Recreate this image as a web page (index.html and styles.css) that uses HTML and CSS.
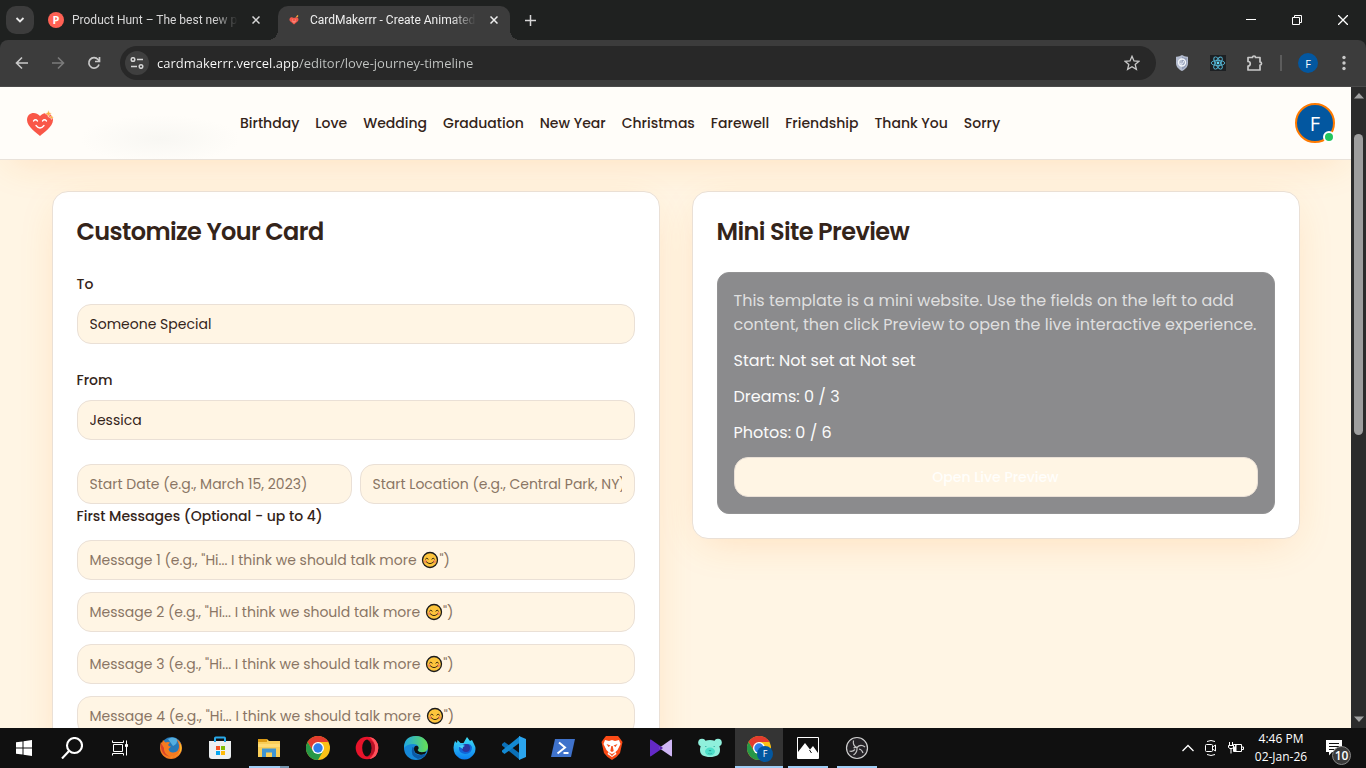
FILE: index.html
```html
<!DOCTYPE html>
<html lang="en">
<head>
<meta charset="utf-8">
<meta name="viewport" content="width=device-width, initial-scale=1">
<title>CardMakerrr - Create Animated Cards</title>
<link rel="stylesheet" href="styles.css">
</head>
<body>

<div class="tabstrip">
  <button class="tab-search" aria-label="Search tabs"><svg width="10" height="10" viewBox="0 0 10 10"><path d="M1.5 3l3.5 3.5L8.500 3" fill="none" stroke="#e8e8e8" stroke-width="1.8"/></svg></button>
  <div class="tab">
    <span class="ph-icon">P</span>
    <span class="tab-title">Product Hunt – The best new pr</span>
    <button class="tab-close" aria-label="Close tab"><svg width="8" height="8" viewBox="0 0 8 8"><path d="M.5.5l7 7m0-7l-7 7" stroke="#d8d8d8" stroke-width="1.5"/></svg></button>
  </div>
  <div class="tab active">
    <svg class="fav" width="16" height="16" viewBox="0 0 16 16"><path d="M8 12.500L4.500 9.500C2 7 4.500 3.500 8 6c3.500-2.500 6 1 3.500 3.500z" fill="#f4594b"/><path d="M10.500 5l1.500-1.500" stroke="#ffb03b" stroke-width="1.200"/><path d="M6 8h.8M9.200 8h.8M6.500 9.500q1.500 1.200 3 0" stroke="#ffd0c4" stroke-width=".6" fill="none"/></svg>
    <span class="tab-title">CardMakerrr - Create Animated</span>
    <button class="tab-close" aria-label="Close tab"><svg width="8" height="8" viewBox="0 0 8 8"><path d="M.5.5l7 7m0-7l-7 7" stroke="#eee" stroke-width="1.5"/></svg></button>
  </div>
  <button class="new-tab" aria-label="New tab"><svg width="11" height="11" viewBox="0 0 11 11"><path d="M5.500 0v11M0 5.500h11" stroke="#d6d6d6" stroke-width="1.5"/></svg></button>
  <div class="win-controls">
    <button aria-label="Minimize"><svg width="10" height="10" viewBox="0 0 10 10"><path d="M0 4.500h10" stroke="#fff"/></svg></button>
    <button aria-label="Restore"><svg width="10" height="10" viewBox="0 0 10 10" fill="none" stroke="#fff"><path d="M.5 2.500h7v7h-7zM2.500 2.500v-2h7v7h-2"/></svg></button>
    <button aria-label="Close"><svg width="10" height="10" viewBox="0 0 10 10"><path d="M0 0l10 10M10 0L0 10" stroke="#fff" stroke-width="1.3"/></svg></button>
  </div>
</div>

<div class="toolbar">
  <button class="tool" aria-label="Back"><svg width="14" height="14" viewBox="0 0 14 14" fill="none" stroke="#c9c9c9" stroke-width="1.6"><path d="M13 7H2M7 1.500L1.500 7 7 12.500"/></svg></button>
  <button class="tool" aria-label="Forward"><svg width="14" height="14" viewBox="0 0 14 14" fill="none" stroke="#7b7b7b" stroke-width="1.6"><path d="M1 7h11M7 1.500L12.500 7 7 12.500"/></svg></button>
  <button class="tool" aria-label="Reload"><svg width="14" height="14" viewBox="0 0 14 14" fill="none" stroke="#c9c9c9" stroke-width="1.7"><path d="M12 8.500A5.200 5.200 0 1 1 11 3.500L12.500 5M12.500 1v4.500H8"/></svg></button>
  <div class="omnibox">
    <button class="site-info" aria-label="View site information"><svg width="14" height="12" viewBox="0 0 14 12" fill="none" stroke="#d5d5d5" stroke-width="1.5"><circle cx="3" cy="2.500" r="1.800"/><path d="M7 2.500h6M1 9.500h6"/><circle cx="11" cy="9.500" r="1.800"/></svg></button>
    <input class="url" type="text" aria-label="Address" value="cardmakerrr.vercel.app/editor/love-journey-timeline">
    <button class="star" aria-label="Bookmark"><svg width="16" height="16" viewBox="0 0 16 16"><path d="M8 1.300l2 4.600 5 .4-3.800 3.200 1.200 4.900L8 11.800l-4.400 2.600 1.200-4.900L1 6.300l5-.4z" fill="none" stroke="#c9c9c9" stroke-width="1.300"/></svg></button>
  </div>
  <div class="extensions">
    <button class="tool" aria-label="Shield"><svg width="14" height="16" viewBox="0 0 14 16"><path d="M7 0q3 2 6 1.700V8c0 4-3 6.500-6 8-3-1.500-6-4-6-8V1.700Q4 2 7 0z" fill="#b4bccf"/><path d="M7 1.500v13c3-1.500 4.800-3.500 4.800-6.500V3Q9 3 7 1.500z" fill="#929cb6"/><circle cx="7" cy="7.500" r="3.500" fill="none" stroke="#f3f6fb" stroke-width="1.400"/><path d="M5 8.500q3 2 3.500-2.500" fill="none" stroke="#dfe6f3" stroke-width="1.200"/></svg></button>
    <button class="tool" aria-label="React tools"><svg width="16" height="16" viewBox="0 0 16 16"><path fill="#1d2023" d="M0 0h16v16H0z"/><g fill="none" stroke="#55b7d6" stroke-width=".9"><ellipse cx="8" cy="8" rx="6.800" ry="2.600"/><ellipse cx="8" cy="8" rx="6.800" ry="2.600" transform="rotate(60 8 8)"/><ellipse cx="8" cy="8" rx="6.800" ry="2.600" transform="rotate(120 8 8)"/></g><circle cx="8" cy="8" r="1.400" fill="#61dafb"/></svg></button>
    <button class="tool" aria-label="Extensions"><svg width="18" height="18" viewBox="0 0 18 18"><path d="M3 3.500h4.500a1.500 1.500 0 0 1 3 0H15V8a1.500 1.500 0 0 1 0 3v5H3v-4a2 2 0 0 0 0-4.500z" fill="none" stroke="#c9c9c9" stroke-width="1.700" stroke-linejoin="round"/></svg></button>
    <span class="sep"></span>
    <button class="avatar-mini">F</button>
    <button class="tool menu" aria-label="Menu"><svg width="4" height="16" viewBox="0 0 4 16" fill="#c9c9c9"><circle cx="2" cy="2.500" r="1.700"/><circle cx="2" cy="8" r="1.700"/><circle cx="2" cy="13.500" r="1.700"/></svg></button>
  </div>
</div>

<div class="viewport">
  <div class="page">
    <header class="site-header">
      <a class="logo" href="#" aria-label="CardMakerrr"><svg width="28" height="27" viewBox="0 -1 28 27"><path d="M14 25C11 22 1 16 1 9 1 2 9-.5 14 5c5-5.500 13-3 13 4 0 7-10 13-13 16z" fill="#f95748"/><path d="M7.500 10q2-2.500 4 0M16.500 10q2-2.500 4 0M10 14.500q4 5 8 0" fill="none" stroke="#fff" stroke-width="1.300" stroke-linecap="round"/><path d="M22.500-1l1 2.600 2.500 1-2.500 1-1 2.600-1-2.600-2.500-1 2.500-1z" fill="#fbb040" stroke="#fffdf9" stroke-width=".5"/><path d="M25.500 4l.7 1.600 1.600.7-1.600.7-.7 1.600-.7-1.600-1.600-.7 1.600-.7z" fill="#fbb040" stroke="#fffdf9" stroke-width=".4"/></svg></a>
      <nav class="site-nav">
        <a href="#">Birthday</a>
        <a href="#">Love</a>
        <a href="#">Wedding</a>
        <a href="#">Graduation</a>
        <a href="#">New Year</a>
        <a href="#">Christmas</a>
        <a href="#">Farewell</a>
        <a href="#">Friendship</a>
        <a href="#">Thank You</a>
        <a href="#">Sorry</a>
      </nav>
      <button class="profile">F<span class="online"></span></button>
    </header>

    <main class="editor">
      <form class="card">
        <h2>Customize Your Card</h2>
        <div class="field">
          <label for="to">To</label>
          <input id="to" class="input" type="text" value="Someone Special">
        </div>
        <div class="field">
          <label for="from">From</label>
          <input id="from" class="input" type="text" value="Jessica">
        </div>
        <div class="start-row">
          <input class="input" type="text" aria-label="Start date" placeholder="Start Date (e.g., March 15, 2023)">
          <input class="input" type="text" aria-label="Start location" placeholder="Start Location (e.g., Central Park, NY)">
        </div>
        <fieldset class="messages">
          <legend>First Messages (Optional - up to 4)</legend>
          <label class="message"><input class="input" type="text" placeholder=" "><span class="hint">Message 1 (e.g., "Hi... I think we should talk more <svg class="smile" viewBox="0 0 18 18"><use href="#smile"/></svg>")</span></label>
          <label class="message"><input class="input" type="text" placeholder=" "><span class="hint">Message 2 (e.g., "Hi... I think we should talk more <svg class="smile" viewBox="0 0 18 18"><use href="#smile"/></svg>")</span></label>
          <label class="message"><input class="input" type="text" placeholder=" "><span class="hint">Message 3 (e.g., "Hi... I think we should talk more <svg class="smile" viewBox="0 0 18 18"><use href="#smile"/></svg>")</span></label>
          <label class="message"><input class="input" type="text" placeholder=" "><span class="hint">Message 4 (e.g., "Hi... I think we should talk more <svg class="smile" viewBox="0 0 18 18"><use href="#smile"/></svg>")</span></label>
        </fieldset>
      </form>

      <section class="card">
        <h2>Mini Site Preview</h2>
        <div class="preview">
          <p class="intro">This template is a mini website. Use the fields on the left to add content, then click Preview to open the live interactive experience.</p>
          <p>Start: Not set at Not set</p>
          <p>Dreams: 0 / 3</p>
          <p>Photos: 0 / 6</p>
          <button class="open-preview">Open Live Preview</button>
        </div>
      </section>
    </main>
  </div>
  <div class="scrollbar">
    <svg width="10" height="6" viewBox="0 0 10 6"><path d="M0 5.500L5 0l5 5.500z" fill="#a0a0a0"/></svg>
    <div class="track"><div class="thumb"></div></div>
    <svg width="10" height="6" viewBox="0 0 10 6"><path d="M0 .5L5 6l5-5.500z" fill="#a0a0a0"/></svg>
  </div>
</div>

<footer class="taskbar">
  <button class="task" aria-label="Start"><svg width="16" height="16" viewBox="0 0 16 16" fill="#fff"><path d="M0 2.300l6.500-.9v6.100H0zM7.500 1.200L16 0v7.500H7.500zM0 8.500h6.500v6.100L0 13.700zM7.500 8.500H16V16l-8.500-1.200z"/></svg></button>
  <button class="task" aria-label="Search"><svg width="22" height="22" viewBox="0 0 22 22" fill="none" stroke="#fff" stroke-width="2.100"><circle cx="13.500" cy="8.500" r="7.500"/><path d="M8 14l-7 7.500"/></svg></button>
  <button class="task" aria-label="Task view"><svg width="18" height="16" viewBox="0 0 18 16" fill="none" stroke="#fff"><path d="M2.500 4.500h9v7h-9zM1.500.5v2h11v-2M1.500 15.500v-2h11v2M15.500.5v15"/><path fill="#fff" d="M14.500 4.500h2v2h-2z"/></svg></button>
  <button class="task" aria-label="Firefox"><svg width="24" height="24" viewBox="0 0 24 24"><circle cx="12.500" cy="11.500" r="10.500" fill="#2779b8"/><path d="M9 3q5-3 9 0 1 5-4 7z" fill="#53aee0"/><path d="M2 6l1 1 1-3 2.500 2.500Q9 5.500 11 6.500L9 9q1 1.500 3 1.500L9.500 13q1 4 5 3.500 5-.5 5.500-5.500Q20 6 17 3q6 3 6 9c0 6-5 11-11 11S1 18 1 12q0-3 1-6z" fill="#f47b20"/><path d="M20 6q5 6 0 12-4 4-9 3 8 0 10-6 1-5-1-9z" fill="#ffc928"/><path d="M2 7q-1 8 4 12l5 2q-7-4-6-9z" fill="#d9422a"/></svg></button>
  <button class="task" aria-label="Store"><svg width="24" height="24" viewBox="0 0 24 24"><path d="M1 5h22v15q0 3-3 3H4q-3 0-3-3z" fill="#eceff1"/><path d="M7 6V2.200q0-.7.7-.7h8.600q.7 0 .7.700V6" fill="none" stroke="#28a8e8" stroke-width="2"/><path fill="#f35325" d="M8 10h4v4H8z"/><path fill="#81bc06" d="M13 10h4v4h-4z"/><path fill="#05a6f0" d="M8 15h4v4H8z"/><path fill="#ffba08" d="M13 15h4v4h-4z"/></svg></button>
  <button class="task running stacked" aria-label="File Explorer"><svg width="22" height="20" viewBox="0 0 22 20"><path d="M0 1h9l2 2h11v16H0z" fill="#f9ce58"/><path d="M0 6h22v3H0z" fill="#ffdc75"/><path d="M0 1h9v3H0z" fill="#dc9a13"/><path d="M4 10.500h14V19h-4v-4.500H8V19H4z" fill="#3f95d3"/></svg></button>
  <button class="task" aria-label="Chrome"><svg width="24" height="24" viewBox="0 0 24 24"><use href="#chrome"/></svg></button>
  <button class="task" aria-label="Opera"><svg width="24" height="24" viewBox="0 0 24 24"><circle cx="12" cy="12" r="11.300" fill="#e8142b"/><path d="M14 1q9 1 9.300 11Q23 22 14 23q6-4 6-11T14 1z" fill="#ff535c"/><ellipse cx="12" cy="12" rx="4.800" ry="8.600" fill="#101010"/><path d="M12 3.400q4.800 2 4.800 8.600T12 20.600q8-1 8-8.600t-8-8.600z" fill="#b51225"/></svg></button>
  <button class="task" aria-label="Edge"><svg width="24" height="24" viewBox="0 0 24 24"><defs><linearGradient id="eg"><stop stop-color="#20a8e3"/><stop offset="1" stop-color="#67df52"/></linearGradient></defs><circle cx="12" cy="12" r="12" fill="#1688d8"/><path d="M0 12Q0 0 12 0c7 0 12 5 12 10.500 0 4-3 6-6.500 6-3 0-4.500-1-3.500-2.500Q16 8 9.500 8 3 8 0 12z" fill="url(#eg)"/><path d="M10 13c0-3.500 3-4 4.500-2Q15 13 13.500 14q1.500 3.500 9 1.500-2 4-7 3-5.500-1-5.500-5.500z" fill="#101010"/><path d="M8.500 11q-3 9 5.500 12 6-1 8-5.500-5 3-9 1-4-2-3-6.500z" fill="#0c59a4"/></svg></button>
  <button class="task" aria-label="Firefox Developer Edition"><svg width="24" height="24" viewBox="0 0 24 24"><defs><linearGradient id="ff" x1="0" y1="0" x2="0" y2="1"><stop stop-color="#3fe0f5"/><stop offset="1" stop-color="#0a7df0"/></linearGradient></defs><path d="M2 5l2 2 .500-3 3 3h3L14 1l3 4 2-1 2 4q3 5 0 10-4 5.500-9.500 5.500T2 18Q-1 12 2 5z" fill="url(#ff)"/><path d="M6 10q3-2 6-1 5-3 7 2 0 7-7 7-6-1-6-5z" fill="#1164d8"/><circle cx="13" cy="12" r="4" fill="#2b35a0"/><path d="M5 10q5-2 7 0-3 1-2 3z" fill="#45cffa"/></svg></button>
  <button class="task" aria-label="VS Code"><svg width="24" height="24" viewBox="0 0 24 24"><path d="M0 8l2.500-2L18 17.500V24L0 9.500z" fill="#0b70b8"/><path d="M0 16l2.500 2L18 6.500V0L0 14.500z" fill="#1389d2"/><path d="M17 0l7 3v18l-7 3z" fill="#2ba5ee"/></svg></button>
  <button class="task" aria-label="PowerShell"><svg width="24" height="20" viewBox="0 0 24 20"><path d="M4 1h20l-4 18H0z" fill="#3f72cb"/><path d="M8 4.500l6 5-7.500 6M12.500 15h5" fill="none" stroke="#fff" stroke-width="2"/></svg></button>
  <button class="task" aria-label="Brave"><svg width="22" height="24" viewBox="0 0 22 24"><path d="M5 0h12l2 2.500L21.500 6 19 17q-3 4.500-8 7-5-2.500-8-7L.5 6 3 2.500z" fill="#fb4b16"/><path d="M4 4l4 1 3-1 3 1 4-1 1.500 4-3 6-2 2 1 2-4.500 3L6.500 18l1-2-2-2-3-6z" fill="#fff"/><path d="M5.500 8l4 1.500-2 1.500zM16.500 8l-4 1.500 2 1.500zM10.300 10h1.400l1 5-1.700 1-1.700-1zM7 16l4 2 4-2-4 4z" fill="#f6501d"/></svg></button>
  <button class="task" aria-label="Media player"><svg width="22" height="18" viewBox="0 0 22 18"><path d="M0 1.500q0-1.500 1.300-.7L13 9 1.300 17Q0 18 0 16.500z" fill="#6429c7"/><path d="M22 1.500q0-1.500-1.300-.7L9 9l11.700 8q1.300 1 1.300-.5z" fill="#cfb6f5"/><path d="M11 7.600L13 9l-2 1.400L9 9z" fill="#5623ad"/></svg></button>
  <button class="task" aria-label="Bear"><svg width="24" height="20" viewBox="0 0 24 20"><g fill="#8ff0dc"><circle cx="4" cy="4.500" r="3.800"/><circle cx="20" cy="4.500" r="3.800"/><path d="M12 2c7 0 10 5 10 10s-4 7-10 7S2 17 2 12 5 2 12 2z"/></g><ellipse cx="12" cy="13.500" rx="5" ry="4" fill="#4cdfc9"/><path d="M10.500 12h3L12 13.500z" fill="#229d93"/><path d="M7 8.500h1.500M15.500 8.500H17M10 15.500q2 1 4 0" stroke="#2fb3a6" stroke-width=".8" fill="none"/></svg></button>
  <button class="task running current" aria-label="Chrome, CardMakerrr"><svg width="24" height="24" viewBox="0 0 24 24"><use href="#chrome"/></svg><span class="task-badge">F</span></button>
  <button class="task running" aria-label="Photos"><svg width="22" height="22" viewBox="0 0 22 22"><path d="M.5.5h21v21H.5z" fill="#101010" stroke="#fff"/><path d="M1 15l7-9 5 6.500L16 9l5 7v5H1z" fill="#fff"/><path d="M12.500 13l2 3" stroke="#101010"/></svg></button>
  <button class="task running" aria-label="OBS"><svg width="24" height="24" viewBox="0 0 24 24"><circle cx="12" cy="12" r="10.500" fill="#242226" stroke="#cfcfcf" stroke-width="1.200"/><path d="M8.500 4.500q-1 5.500 3.500 7M12 11.500q3.500-4 8-.5M12 11.500q.5 5-3.500 7.500M12 11.500q-2-.5-3.500.5M4.500 15q3 1 5.500-1.500M18 17q-1-3.500-4-4" fill="none" stroke="#c5c5c5" stroke-width="1.200"/></svg></button>

  <div class="tray">
    <button aria-label="Show hidden icons"><svg width="12" height="8" viewBox="0 0 12 8"><path d="M.5 7L6 1.500 11.500 7" fill="none" stroke="#fff" stroke-width="1.300"/></svg></button>
    <button aria-label="Meet now"><svg width="12" height="16" viewBox="0 0 12 16" fill="none" stroke="#fff"><rect x=".5" y="4.500" width="7" height="7" rx="1"/><path d="M7.500 7l3-2v6l-3-2M2 1.500q4-2 8 0M2 14.500q4 2 8 0"/></svg></button>
    <button aria-label="Battery"><svg width="16" height="12" viewBox="0 0 16 12" fill="none" stroke="#fff"><path d="M5.500 2.500h8v7h-8zM14 5h1.500v2.500H14M1.500 0v3M4.500 0v3M.5 3.500h5v2l-1.500 1H2l-1.500-1zM3 6.500v5"/><path d="M6 9V6l2-3v6z" fill="#fff"/></svg></button>
  </div>
  <time class="clock"><span>4:46 PM</span><span>02-Jan-26</span></time>
  <button class="notify" aria-label="Notifications"><svg width="16" height="16" viewBox="0 0 16 16"><path d="M0 0h16v12H6l-3 3.500V12H0z" fill="#fff"/><path d="M3 3.500h10M3 6.500h10M3 9.500h5" stroke="#101010"/></svg><span class="count">10</span></button>
</footer>

<svg class="sprites" width="0" height="0" aria-hidden="true">
  <symbol id="smile" viewBox="0 0 18 18"><circle cx="9" cy="9" r="7.500" fill="#fcc43c" stroke="#1b1b1b" stroke-width="1.300"/><circle cx="4.500" cy="10.500" r="1.500" fill="#f58a55"/><circle cx="13.500" cy="10.500" r="1.500" fill="#f58a55"/><path d="M4.500 8q1.300-2 2.700 0M10.800 8q1.300-2 2.700 0M5.500 11q3.500 3.500 7 0" fill="none" stroke="#3a2a12" stroke-linecap="round"/></symbol>
  <symbol id="chrome" viewBox="0 0 24 24"><circle cx="12" cy="12" r="12" fill="#fbc116"/><path d="M1.600 6a12 12 0 0 1 20.800 0H12L7 15z" fill="#e33b2e"/><path d="M1.600 6a12 12 0 0 0 10.400 18l5.200-9L7 15z" fill="#279847"/><circle cx="12" cy="12" r="6" fill="#fff"/><circle cx="12" cy="12" r="4.700" fill="#2f7de9"/></symbol>
</svg>
</body>
</html>
```
FILE: styles.css
```css
*{box-sizing:border-box;}
body{margin:0;height:100vh;display:flex;flex-direction:column;overflow:hidden;background:#1f2120;font-family:"Open Sans","Noto Sans",sans-serif;font-size:12px;}
button{padding:0;border:0;background:none;color:inherit;font:inherit;display:flex;align-items:center;justify-content:center;flex:none;}
input{font:inherit;}
a{text-decoration:none;color:inherit;}
p,h2{margin:0;}
.sprites{position:absolute;}

/* tab strip */
.tabstrip{display:flex;align-items:flex-start;height:40px;flex:none;padding:6px 0 0 6px;color:#d8d8d8;background:#1f2120;}
.tab-search{width:28px;height:28px;border-radius:10px;background:#3c3c3c;}
.tab{display:flex;align-items:center;width:232px;height:34px;margin-left:6px;padding:0 10px 6px 8px;gap:8px;}
.tab.active{border-radius:10px 10px 0 0;background:#3c3c3c;color:#eee;position:relative;}
.tab.active:before,.tab.active:after{content:"";position:absolute;bottom:0;width:10px;height:10px;}
.tab.active:before{left:-10px;background:radial-gradient(circle at 0 0,transparent 10px,#3c3c3c 10px);}
.tab.active:after{right:-10px;background:radial-gradient(circle at 100% 0,transparent 10px,#3c3c3c 10px);}
.ph-icon{width:16px;height:16px;flex:none;border-radius:50%;background:#ff6154;color:#fff;font:bold 11px/16px "Open Sans",sans-serif;text-align:center;}
.fav{flex:none;}
.tab-title{flex:1;overflow:hidden;white-space:nowrap;font-family:Roboto,sans-serif;-webkit-mask-image:linear-gradient(to right,#000 85%,transparent);mask-image:linear-gradient(to right,#000 85%,transparent);}
.tab-close{width:12px;height:16px;margin-left:4px;}
.new-tab{width:28px;height:28px;margin-left:6px;}
.win-controls{display:flex;margin-left:auto;}
.win-controls button{width:46px;height:28px;}

/* toolbar */
.toolbar{display:flex;align-items:center;height:47px;flex:none;padding:0 4px;background:#3c3c3c;border-radius:8px 8px 0 0;border-bottom:1px solid #4a4a4a;}
.tool{width:36px;height:34px;}
.omnibox{display:flex;align-items:center;flex:1;height:34px;margin:0 8px;padding:0 16px 0 5px;border-radius:17px;background:#282828;}
.site-info{width:24px;height:24px;border-radius:50%;background:#3f3f3f;}
.url{flex:1;min-width:0;border:0;outline:0;padding:0 8px;font-size:13px;line-height:20px;color:transparent;background:linear-gradient(to right,#fff 150px,#c4c7c5 150px);-webkit-background-clip:text;background-clip:text;}
.extensions{display:flex;align-items:center;}
.sep{width:2px;height:16px;margin:0 16px 0 8px;background:#5c5c5c;}
.avatar-mini{width:20px;height:20px;border-radius:50%;background:#0357a0;color:#fff;font-size:11px;}
.menu{margin-left:8px;}

/* page */
.viewport{display:flex;flex:1;min-height:0;}
.page{flex:1;overflow:hidden;background:#fff5e4;color:#34241a;font-family:Poppins,Inter,sans-serif;font-size:14px;line-height:24px;}
.site-header{display:flex;align-items:center;height:73px;padding:0 16px;position:relative;border-bottom:1px solid #e9e2da;background:radial-gradient(80px 24px at 160px 52px,#f8f7f3,transparent),#fffdf9;box-shadow:0 10px 40px -10px rgba(255,140,30,.2);}
.logo{display:flex;justify-content:center;width:48px;}
.site-nav{display:flex;gap:16px;margin-left:176px;font-weight:500;white-space:nowrap;}
.profile{position:relative;width:40px;height:40px;margin-left:auto;border:2px solid #ff7a00;border-radius:50%;background:#0357a0;color:#fff;font:20px "Open Sans",sans-serif;}
.online{position:absolute;right:-2px;bottom:-2px;width:12px;height:12px;border:2px solid #fff;border-radius:50%;background:#22c55e;}
.editor{display:grid;grid-template-columns:1fr 1fr;align-items:start;gap:32px;max-width:1280px;margin:0 auto;padding:31px 16px;}
.card{min-width:0;padding:24px;border:1px solid #eae0d6;border-radius:16px;background:#fff;box-shadow:0 10px 40px -10px rgba(255,140,30,.22);}
.card h2{margin-bottom:24px;font-size:24px;line-height:32px;font-weight:600;letter-spacing:-.025em;}
.field{margin-bottom:24px;}
.field label{display:block;margin-bottom:8px;font-weight:500;}
.input{display:block;width:100%;min-width:0;height:40px;padding:0 12px;border:1px solid #eae0d6;border-radius:14px;background:#fff5e4;color:#34241a;outline:0;}
.input::placeholder{color:#8a7564;opacity:1;}
.start-row{display:flex;gap:8px;}
.messages{display:grid;gap:12px;margin:0;padding:0;border:0;}
.messages legend{padding:0;margin-bottom:12px;font-weight:500;}
.message{display:block;position:relative;}
.hint{position:absolute;left:13px;top:8px;color:#8a7564;white-space:nowrap;pointer-events:none;}
.input:not(:placeholder-shown)+.hint{display:none;}
.smile{width:18px;height:18px;margin-left:1px;vertical-align:-4px;}
.preview{display:grid;gap:12px;padding:16px;border:1px solid #939394;border-radius:12px;background:#8b8b8d;color:#fafafa;font-size:16px;line-height:24px;}
.intro{color:#dfdfdf;}
.open-preview{width:100%;height:40px;border:1px solid #eae0d6;border-radius:14px;background:#fff5e4;color:#fffefb;font-size:14px;font-weight:500;}

.scrollbar{display:flex;flex-direction:column;align-items:center;width:15px;padding:6px 0;background:#2b2b2b;}
.track{flex:1;width:9px;padding:35px 0;}
.thumb{height:55%;border-radius:5px;background:#9e9e9e;}

/* taskbar */
.taskbar{display:flex;align-items:center;height:40px;flex:none;background:#101010;color:#fff;}
.task{position:relative;width:48px;height:40px;}
.task:nth-child(n+4){margin-left:1px;}
.task:nth-child(4){margin-left:3px;}
.running:after{content:"";position:absolute;left:4px;right:4px;bottom:0;height:2px;background:#9fcdf5;}
.stacked:after{background:linear-gradient(to right,#9fcdf5 31px,#7595af 31px);}
.current{background:#343434;}
.current:after{left:0;right:0;}
.task-badge{position:absolute;left:22px;top:18px;width:16px;height:16px;border-radius:50%;background:#0357a0;font-size:9px;line-height:16px;}
.tray{display:flex;gap:11px;margin-left:auto;}
.clock{display:flex;flex-direction:column;width:74px;text-align:center;line-height:18px;white-space:nowrap;}
.notify{position:relative;width:32px;height:40px;margin-right:16px;}
.count{position:absolute;left:14px;top:18px;width:19px;height:19px;border:1px solid #888;border-radius:50%;background:#3a3a3a;font-weight:600;line-height:17px;}
```
